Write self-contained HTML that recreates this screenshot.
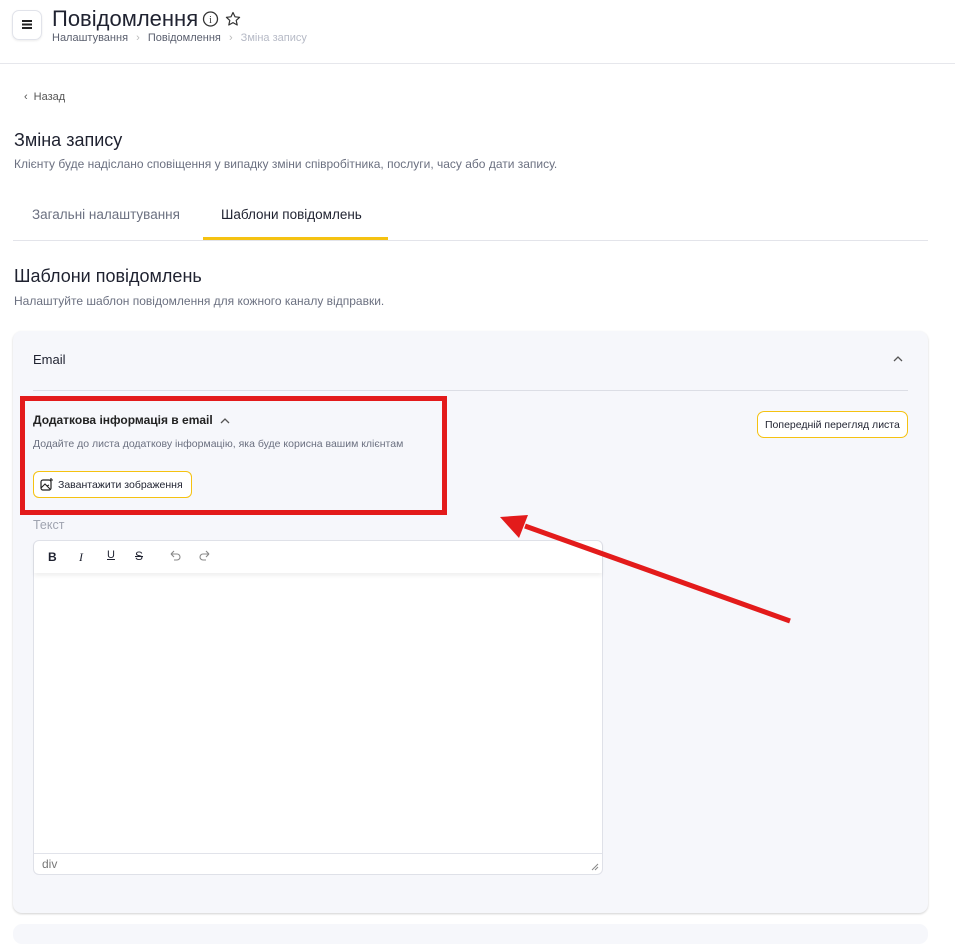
<!DOCTYPE html>
<html><head><meta charset="utf-8"><style>
*{box-sizing:border-box;margin:0;padding:0}
body{width:955px;height:930px;overflow:hidden;background:#fff;font-family:"Liberation Sans",sans-serif;color:#1f2230;position:relative}
.a{position:absolute;white-space:nowrap}
</style></head><body>
<div class="a" style="left:12px;top:10px;width:30px;height:30px;border:1px solid #e1e3ea;border-radius:7px;box-shadow:0 1px 2px rgba(0,0,0,.08)"></div>
<div class="a" style="left:22px;top:20px;width:10px;height:1.6px;background:#222;box-shadow:0 3.5px 0 #222,0 7px 0 #222"></div>
<div class="a" style="left:52px;top:6px;font-size:22px;color:#1f2230">Повідомлення</div>
<svg class="a" style="left:202px;top:10px" width="40" height="18" viewBox="0 0 40 18"><circle cx="8.5" cy="9" r="7" fill="none" stroke="#333" stroke-width="1.3"/><text x="8.5" y="13" font-size="10" text-anchor="middle" font-family="Liberation Serif" fill="#333">i</text><path d="M31 2.5l2 4.3 4.6.5-3.4 3.1 1 4.6-4.2-2.4-4.2 2.4 1-4.6-3.4-3.1 4.6-.5z" fill="none" stroke="#333" stroke-width="1.2" stroke-linejoin="round"/></svg>
<div class="a" style="left:52px;top:32px;font-size:11px;color:#5a5f6e">Налаштування <span style="color:#bbb;margin:0 5px">›</span> Повідомлення <span style="color:#bbb;margin:0 5px">›</span> <span style="color:#b6bac6">Зміна запису</span></div>
<div class="a" style="left:0;top:63px;width:955px;height:1px;background:#e6e7ec"></div>
<div class="a" style="left:24px;top:91px;font-size:11px;color:#555"><span style="margin-right:6px">‹</span>Назад</div>
<div class="a" style="left:14px;top:130px;font-size:18px">Зміна запису</div>
<div class="a" style="left:14px;top:157px;font-size:12px;color:#6b7080">Клієнту буде надіслано сповіщення у випадку зміни співробітника, послуги, часу або дати запису.</div>
<div class="a" style="left:32px;top:207px;font-size:13.5px;color:#6b7080">Загальні налаштування</div>
<div class="a" style="left:221px;top:207px;font-size:13.5px;color:#1f2230">Шаблони повідомлень</div>
<div class="a" style="left:13px;top:240px;width:915px;height:1px;background:#e3e4ea"></div>
<div class="a" style="left:203px;top:237px;width:185px;height:3px;background:#f5c211"></div>
<div class="a" style="left:14px;top:266px;font-size:18px">Шаблони повідомлень</div>
<div class="a" style="left:14px;top:294px;font-size:12px;color:#6b7080">Налаштуйте шаблон повідомлення для кожного каналу відправки.</div>
<div class="a" style="left:13px;top:331px;width:915px;height:582px;background:#f6f7fb;border-radius:9px;box-shadow:0 1px 2px rgba(0,0,0,.18)"></div>
<div class="a" style="left:13px;top:924px;width:915px;height:20px;background:#f6f7fb;border-radius:9px"></div>
<div class="a" style="left:33px;top:352px;font-size:13px">Email</div>
<svg class="a" style="left:892px;top:354px" width="12" height="10"><path d="M2 7l4-4 4 4" fill="none" stroke="#555" stroke-width="1.3"/></svg>
<div class="a" style="left:33px;top:390px;width:875px;height:1px;background:#dcdee5"></div>
<div class="a" style="left:33px;top:413px;font-size:12px;font-weight:bold;color:#222">Додаткова інформація в email</div>
<svg class="a" style="left:219px;top:416px" width="12" height="10"><path d="M2 7l4-4 4 4" fill="none" stroke="#555" stroke-width="1.3"/></svg>
<div class="a" style="left:33px;top:438px;font-size:10.5px;color:#6b7080">Додайте до листа додаткову інформацію, яка буде корисна вашим клієнтам</div>
<div class="a" style="left:33px;top:471px;width:159px;height:27px;border:1px solid #f5c211;border-radius:6px;background:#fff;font-size:10.5px;padding:7px 0 0 24px">Завантажити зображення</div>
<svg class="a" style="left:40px;top:478px" width="14" height="14" viewBox="0 0 14 14"><rect x="1" y="2" width="10" height="10" rx="2" fill="none" stroke="#222" stroke-width="1.2"/><path d="M1 10l4-4 5 5M7 8l2-1" fill="none" stroke="#222" stroke-width="1.1"/><path d="M11 0v4M9 2h4" stroke="#222" stroke-width="1.1"/></svg>
<div class="a" style="left:757px;top:411px;width:151px;height:27px;border:1px solid #f5c211;border-radius:7px;background:#fff;font-size:10.5px;padding:7px 0 0 7px">Попередній перегляд листа</div>
<div class="a" style="left:20px;top:396px;width:427px;height:119px;border:5px solid #e31b1b"></div>
<div class="a" style="left:33px;top:518px;font-size:12.5px;color:#a0a4b0">Текст</div>
<div class="a" style="left:33px;top:540px;width:570px;height:335px;background:#fff;border:1px solid #dfe1e8;border-radius:6px"></div>
<div class="a" style="left:34px;top:541px;width:568px;height:32px;box-shadow:0 3px 4px rgba(0,0,0,.06)"></div>
<div class="a" style="left:48px;top:550px;font-size:12px;font-weight:bold">B</div>
<div class="a" style="left:79px;top:550px;font-size:12px;font-style:italic;font-family:'Liberation Serif'">I</div>
<div class="a" style="left:107px;top:549px;font-size:11px;text-decoration:underline">U</div>
<div class="a" style="left:135px;top:549px;font-size:12px;text-decoration:line-through">S</div>
<svg class="a" style="left:168px;top:550px" width="44" height="14"><path d="M3 4h6a3 3 0 010 6H6M3 4l3-3M3 4l3 3" fill="none" stroke="#888" stroke-width="1.1"/><path d="M41 4h-6a3 3 0 000 6h3M41 4l-3-3M41 4l-3 3" fill="none" stroke="#888" stroke-width="1.1"/></svg>
<div class="a" style="left:34px;top:853px;width:568px;height:1px;background:#e1e3ea"></div>
<div class="a" style="left:42px;top:857px;font-size:12px;color:#777">div</div>
<svg class="a" style="left:590px;top:862px" width="10" height="10"><path d="M2 8l6-6M5 8l3-3" stroke="#888" stroke-width="1"/></svg>
<svg class="a" style="left:0;top:0" width="955" height="930"><line x1="790" y1="621" x2="525" y2="526" stroke="#e31b1b" stroke-width="5"/><polygon points="500,517 528,515 519,538" fill="#e31b1b"/></svg>
</body></html>
